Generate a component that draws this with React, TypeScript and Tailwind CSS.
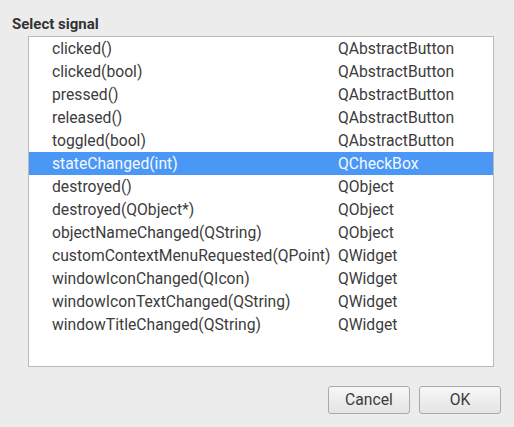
import React from "react";

const rows: [string, string][] = [
  ["clicked()", "QAbstractButton"],
  ["clicked(bool)", "QAbstractButton"],
  ["pressed()", "QAbstractButton"],
  ["released()", "QAbstractButton"],
  ["toggled(bool)", "QAbstractButton"],
  ["stateChanged(int)", "QCheckBox"],
  ["destroyed()", "QObject"],
  ["destroyed(QObject*)", "QObject"],
  ["objectNameChanged(QString)", "QObject"],
  ["customContextMenuRequested(QPoint)", "QWidget"],
  ["windowIconChanged(QIcon)", "QWidget"],
  ["windowIconTextChanged(QString)", "QWidget"],
  ["windowTitleChanged(QString)", "QWidget"],
];

export default function App() {
  return (
    <div
      className="w-[514px] h-[427px] bg-[#ececec] flex flex-col text-[#3c3c3c] overflow-hidden"
      style={{ fontFamily: "Roboto, sans-serif" }}
    >
      <div className="pl-[12px] pt-[15px] h-[36px] text-[15px] leading-[18px] font-bold text-[#333]">
        Select signal
      </div>
      <div className="ml-[28px] mr-[20px] h-[331px] bg-white border border-[#b9b9b9] flex flex-col">
        {rows.map(([a, b], i) => {
          const sel = i === 5;
          return (
            <div
              key={i}
              className={
                "flex h-[23px] items-center text-[15.7px] leading-[23px] " +
                (sel ? "bg-[#4a97f5] text-[#f4f8ff]" : "")
              }
            >
              <div className="pl-[23px] w-[309px] whitespace-nowrap">{a}</div>
              <div className="whitespace-nowrap">{b}</div>
            </div>
          );
        })}
      </div>
      <div className="flex justify-end gap-[9px] pr-[13px] pt-[19px]">
        <button className="w-[82px] h-[28px] rounded-[3px] border border-[#a9a9a9] bg-gradient-to-b from-[#f7f7f7] to-[#e4e4e4] text-[15.7px] text-[#3c3c3c]">
          Cancel
        </button>
        <button className="w-[82px] h-[28px] rounded-[3px] border border-[#a9a9a9] bg-gradient-to-b from-[#f7f7f7] to-[#e4e4e4] text-[15.7px] text-[#3c3c3c]">
          OK
        </button>
      </div>
    </div>
  );
}
